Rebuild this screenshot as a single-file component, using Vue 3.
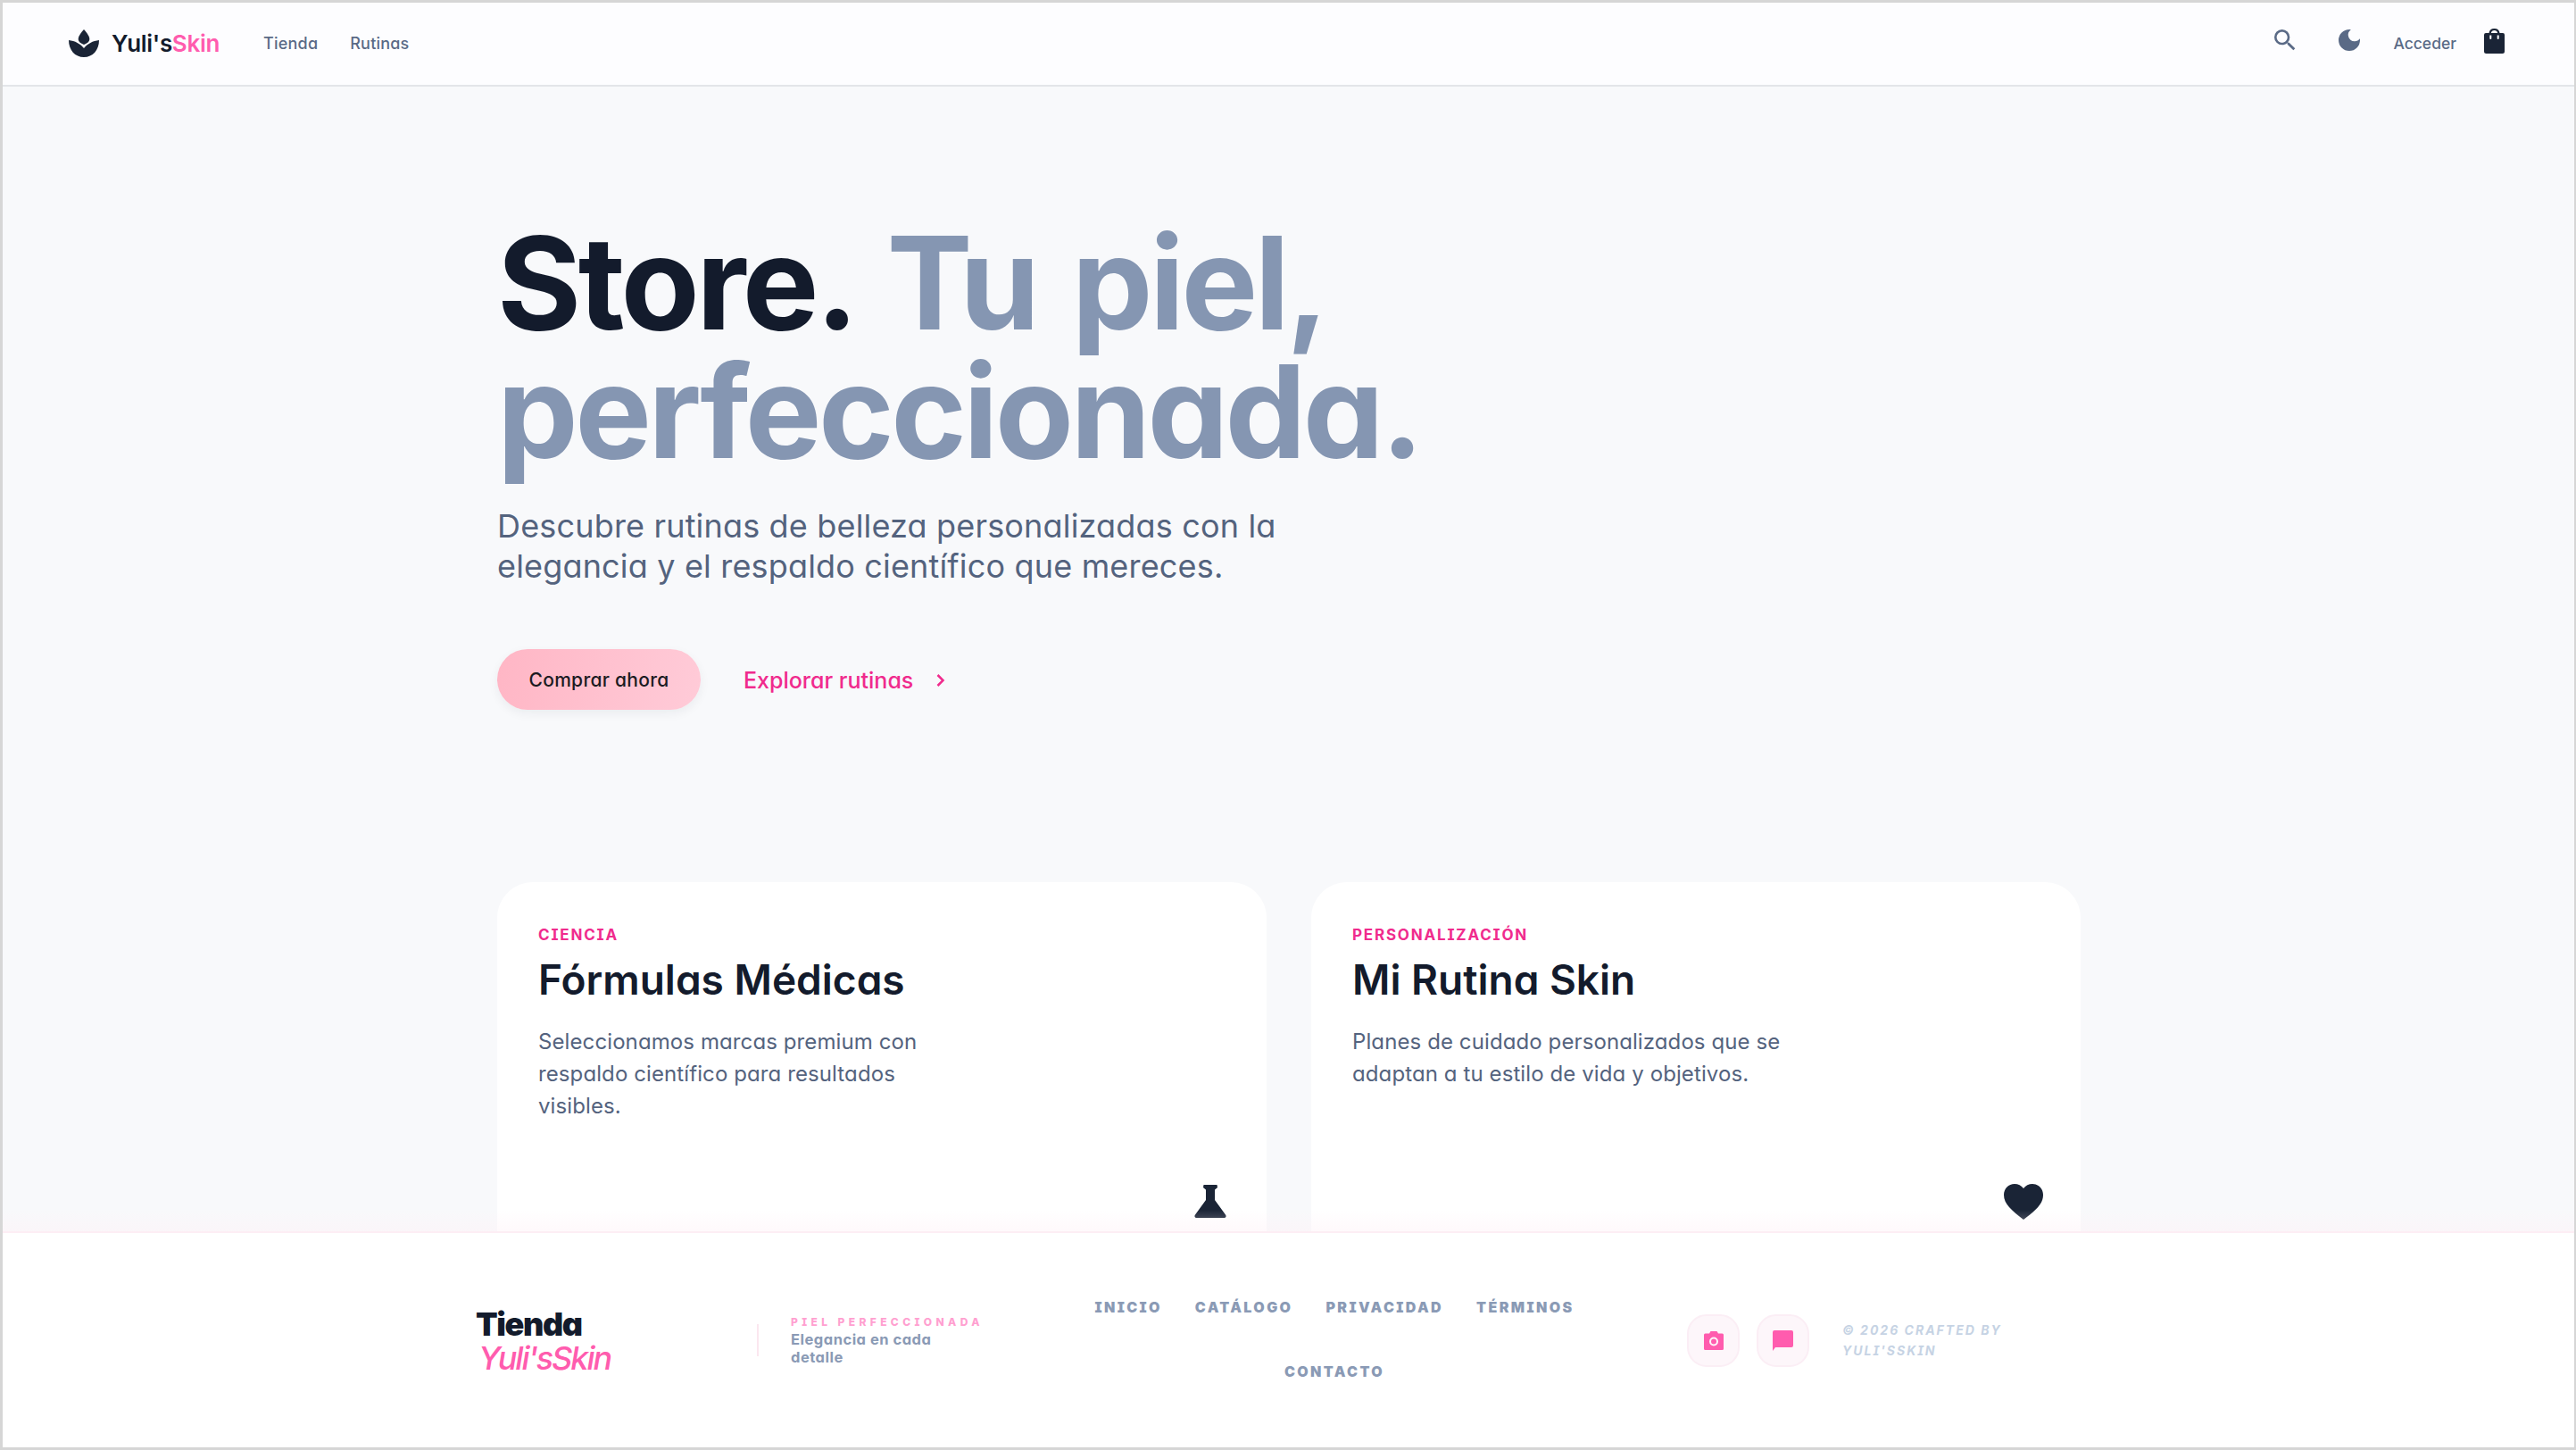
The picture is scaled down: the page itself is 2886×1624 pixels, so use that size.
<template>
  <div class="frame">
    <header class="topbar">
      <div class="topbar-left">
        <a class="brand">
          <svg class="brand-mark" viewBox="0 0 34 31">
            <path d="M17 0c3.800 4 6.300 8 6.300 11 0 2.500-2.500 4.500-6.300 6-3.800-1.500-6.300-3.500-6.300-6C10.700 8 13.200 4 17 0z" />
            <path d="M0 12c7 .7 13 4 17 9 4-5 10-8.300 17-9 0 11-7 19-17 19S0 23 0 12z" />
          </svg>
          <span class="brand-name">Yuli's<em>Skin</em></span>
        </a>
        <nav class="topnav">
          <a>Tienda</a>
          <a>Rutinas</a>
        </nav>
      </div>
      <div class="topbar-right">
        <svg class="ico-search" viewBox="0 0 24 24">
          <path d="M15.500 14h-.79l-.28-.27A6.471 6.471 0 0 0 16 9.500 6.500 6.500 0 1 0 9.500 16c1.610 0 3.090-.59 4.230-1.570l.27.28v.79l5 4.990L20.490 19l-4.990-5zm-6 0C7.010 14 5 11.990 5 9.500S7.010 5 9.500 5 14 7.010 14 9.500 11.990 14 9.500 14z" />
        </svg>
        <svg class="ico-moon" viewBox="0 0 24 24">
          <path d="M12 3a9 9 0 1 0 9 9c0-.46-.04-.92-.1-1.360a5.389 5.389 0 0 1-4.400 2.260 5.403 5.403 0 0 1-3.140-9.800c-.44-.06-.9-.1-1.360-.1z" />
        </svg>
        <a class="signin">Acceder</a>
        <svg class="ico-bag" viewBox="0 0 23 28">
          <path fill-rule="evenodd" d="M11.500 0a6 6 0 0 1 6 5h3.500a2 2 0 0 1 2 2v18.500a2.500 2.500 0 0 1-2.500 2.500H2.500A2.500 2.500 0 0 1 0 25.500V7a2 2 0 0 1 2-2h3.500a6 6 0 0 1 6-5zM7.800 5h7.400a3.800 3.800 0 0 0-7.400 0zM6.300 7.500v3.500a1 1 0 0 0 2 0V7.500zM14.700 7.500v3.500a1 1 0 0 0 2 0V7.500z" />
        </svg>
      </div>
    </header>

    <main class="page">
      <section class="hero">
        <h1><span class="dark">Store.</span> Tu piel, perfeccionada.</h1>
        <p class="lead">Descubre rutinas de belleza personalizadas con la elegancia y el respaldo científico que mereces.</p>
        <div class="actions">
          <button class="btn-buy">Comprar ahora</button>
          <a class="link-explore">
            Explorar rutinas
            <svg viewBox="0 0 12 16"><path d="M2.500 2l6 6-6 6" /></svg>
          </a>
        </div>
      </section>

      <section class="cards">
        <article v-for="card in cards" :key="card.title" class="card">
          <div class="card-tag">{{ card.tag }}</div>
          <h2>{{ card.title }}</h2>
          <p>{{ card.text }}</p>
          <svg v-if="card.icon === 'flask'" class="card-flask" viewBox="0 0 36 37">
            <path d="M10.500 0h15l.5 3-3 2.500V17l12 16.500c1.300 2 .2 3.500-1.800 3.500H2.800C.8 37-.3 35.500 1 33.500L13 17V5.500L10 3z" />
          </svg>
          <svg v-else class="card-heart" viewBox="0 0 46 42">
            <path d="M23 42C9 31 0 24 0 13 0 5.500 5.500 0 12.500 0c4.200 0 8.200 2 10.500 5.200C25.300 2 29.300 0 33.500 0 40.500 0 46 5.500 46 13c0 11-9 18-23 29z" />
          </svg>
        </article>
      </section>
    </main>

    <footer class="foot">
      <div class="foot-brand">
        <strong>Tienda</strong>
        <em>Yuli'sSkin</em>
      </div>
      <div class="foot-rule"></div>
      <div class="foot-note">
        <span>Piel perfeccionada</span>
        <b>Elegancia en cada detalle</b>
      </div>
      <nav class="foot-nav">
        <a v-for="item in footLinks" :key="item">{{ item }}</a>
      </nav>
      <div class="foot-social">
        <span class="round">
          <svg class="ico-cam" viewBox="0 0 22 21"><path fill-rule="evenodd" d="M7.500 0h7L16 2.500h4.500A1.500 1.500 0 0 1 22 4v15.500a1.500 1.500 0 0 1-1.500 1.500h-19A1.500 1.500 0 0 1 0 19.500V4a1.500 1.500 0 0 1 1.500-1.500H6zM11 16.500a5 5 0 1 0 0-10 5 5 0 0 0 0 10zm0-2a3 3 0 1 1 0-6 3 3 0 0 1 0 6z" /></svg>
        </span>
        <span class="round">
          <svg class="ico-chat" viewBox="0 0 23 23"><path d="M2 0h19a2 2 0 0 1 2 2v15a2 2 0 0 1-2 2H3l-3 4V2a2 2 0 0 1 2-2z" /></svg>
        </span>
      </div>
      <p class="foot-copy">© 2026 Crafted by Yuli'sSkin</p>
    </footer>
  </div>
</template>

<script setup>
const cards = [
  {
    tag: 'Ciencia',
    title: 'Fórmulas Médicas',
    text: 'Seleccionamos marcas premium con respaldo científico para resultados visibles.',
    icon: 'flask',
  },
  {
    tag: 'Personalización',
    title: 'Mi Rutina Skin',
    text: 'Planes de cuidado personalizados que se adaptan a tu estilo de vida y objetivos.',
    icon: 'heart',
  },
]

const footLinks = ['Inicio', 'Catálogo', 'Privacidad', 'Términos', 'Contacto']
</script>

<style>
html,
body {
  margin: 0;
  background: #fff;
}
</style>

<style scoped>
.frame {
  width: 2886px;
  height: 1624px;
  box-sizing: border-box;
  border: 3px solid #d6d6d6;
  border-right-width: 2px;
  display: flex;
  flex-direction: column;
  overflow: hidden;
  background: #f8f9fb;
  font-family: Inter, "Noto Sans", sans-serif;
  font-feature-settings: "cv11", "cv08";
  color: #131b2c;
}

.topbar {
  flex: none;
  height: 94px;
  box-sizing: border-box;
  padding: 0 78px 2px 74px;
  display: flex;
  align-items: center;
  justify-content: space-between;
  background: #fdfdff;
  border-bottom: 2px solid #e3e5e9;
}
.topbar-left {
  display: flex;
  align-items: center;
  gap: 49px;
}
.brand {
  display: flex;
  align-items: center;
  gap: 14px;
}
.brand-mark {
  width: 34px;
  height: 31px;
  fill: #1a2436;
}
.brand-name {
  font-size: 26px;
  font-weight: 600;
  letter-spacing: -0.3px;
}
.brand-name em {
  font-style: normal;
  color: #ff5cae;
}
.topnav {
  display: flex;
  gap: 36px;
  font-size: 18px;
  font-weight: 500;
  letter-spacing: 0.2px;
  color: #5a6a86;
}
.topbar-right {
  display: flex;
  align-items: center;
}
.ico-search {
  width: 32px;
  height: 32px;
  fill: #5a6a86;
  margin: 0 40px 6px 0;
}
.ico-moon {
  width: 32px;
  height: 32px;
  fill: #5a6a86;
  margin: 0 33px 6px 0;
}
.signin {
  font-size: 17.500px;
  font-weight: 500;
  color: #5a6a86;
  margin-right: 31px;
}
.ico-bag {
  width: 23px;
  height: 28px;
  fill: #1a2436;
  margin-bottom: 4px;
}

.page {
  position: relative;
  flex: 1;
  min-height: 0;
  overflow: hidden;
  padding-left: 554px;
}
.page::after {
  content: '';
  position: absolute;
  left: 0;
  right: 0;
  bottom: 0;
  height: 24px;
  background: linear-gradient(rgba(255, 240, 246, 0), rgba(255, 240, 246, 0.4));
}
.hero {
  padding-top: 148px;
}
.hero h1 {
  margin: 0;
  width: 1100px;
  font-size: 144px;
  line-height: 144px;
  font-weight: 650;
  letter-spacing: -3.600px;
  word-spacing: 9px;
  color: #8596b2;
}
.hero h1 .dark {
  color: #131b2c;
}
.lead {
  margin: 34px 0 0;
  width: 900px;
  font-size: 36px;
  line-height: 45px;
  letter-spacing: 0.17px;
  color: #54637e;
}
.actions {
  margin-top: 70px;
  display: flex;
  align-items: center;
  gap: 48px;
}
.btn-buy {
  width: 228px;
  height: 68px;
  border: 0;
  border-radius: 34px;
  background: linear-gradient(100deg, #ffb6c5, #ffcbd8);
  box-shadow: 0 4px 12px rgba(20, 30, 50, 0.06);
  font: 500 21px Inter, sans-serif;
  font-feature-settings: "cv11";
  letter-spacing: 0.3px;
  color: #1b1b22;
}
.link-explore {
  display: flex;
  align-items: center;
  gap: 25px;
  padding-top: 2px;
  font-size: 25px;
  font-weight: 500;
  color: #f02b8d;
}
.link-explore svg {
  width: 12px;
  height: 16px;
  fill: none;
  stroke: #f02b8d;
  stroke-width: 2.500;
}

.cards {
  margin-top: 193px;
  width: 1774px;
  display: grid;
  grid-template-columns: 862px 862px;
  gap: 50px;
}
.card {
  position: relative;
  height: 500px;
  box-sizing: border-box;
  padding: 49px 46px;
  background: #fff;
  border-radius: 40px;
}
.card-tag {
  font-size: 17px;
  line-height: 20px;
  font-weight: 700;
  letter-spacing: 1.800px;
  text-transform: uppercase;
  color: #f02b8d;
}
.card h2 {
  margin: 10px 0 0;
  font-size: 46px;
  line-height: 60px;
  font-weight: 600;
  color: #131b2c;
}
.card p {
  margin: 22px 0 0;
  width: 486px;
  font-size: 24px;
  line-height: 36px;
  letter-spacing: 0.1px;
  color: #54637e;
}
.card-flask,
.card-heart {
  position: absolute;
  fill: #1a2436;
}
.card-flask {
  left: 781px;
  top: 339px;
  width: 36px;
  height: 37px;
}
.card-heart {
  left: 776px;
  top: 337px;
  width: 44px;
  height: 42px;
}

.foot {
  flex: none;
  height: 242px;
  box-sizing: border-box;
  padding: 0 0 0 530px;
  display: flex;
  align-items: center;
  background: #fff;
  border-top: 2px solid #fdeef4;
}
.foot-brand {
  flex: none;
  width: 315px;
  display: flex;
  flex-direction: column;
  font-size: 36px;
  line-height: 38px;
}
.foot-brand strong {
  font-weight: 900;
  letter-spacing: -1.400px;
  padding-top: 1px;
}
.foot-brand em {
  font-weight: 500;
  letter-spacing: -2px;
  color: #ff5cae;
  padding-left: 3px;
}
.foot-rule {
  flex: none;
  width: 2px;
  height: 36px;
  background: #fbe7ef;
}
.foot-note {
  flex: none;
  width: 212px;
  margin-left: 36px;
  display: flex;
  flex-direction: column;
  font-size: 16.500px;
  line-height: 20px;
  letter-spacing: 0.5px;
  color: #8a9ab5;
}
.foot-note span {
  font-size: 12px;
  line-height: 18px;
  font-weight: 800;
  letter-spacing: 4.400px;
  white-space: nowrap;
  text-transform: uppercase;
  color: #ffa0d0;
}
.foot-note b {
  width: 170px;
}
.foot-nav {
  flex: none;
  width: 560px;
  margin: 0 0 2px 117px;
  display: flex;
  flex-wrap: wrap;
  justify-content: center;
  column-gap: 37px;
  row-gap: 52px;
  font-size: 16px;
  line-height: 20px;
  font-weight: 900;
  letter-spacing: 2.400px;
  text-transform: uppercase;
  color: #8a9ab5;
}
.foot-social {
  flex: none;
  display: flex;
  gap: 19px;
  margin-left: 115px;
}
.round {
  width: 59px;
  height: 59px;
  border-radius: 22px;
  background: #fdf6fa;
  border: 2px solid #fbeef5;
  box-sizing: border-box;
  display: flex;
  align-items: center;
  justify-content: center;
}
.round svg {
  fill: #ff5cae;
}
.ico-cam {
  width: 22px;
  height: 21px;
}
.ico-chat {
  width: 23px;
  height: 23px;
}
.foot-copy {
  flex: none;
  width: 200px;
  margin: 0 0 0 37px;
  font-size: 14px;
  line-height: 23px;
  font-style: italic;
  font-weight: 700;
  letter-spacing: 2px;
  text-transform: uppercase;
  color: #c6d3e4;
}
</style>
